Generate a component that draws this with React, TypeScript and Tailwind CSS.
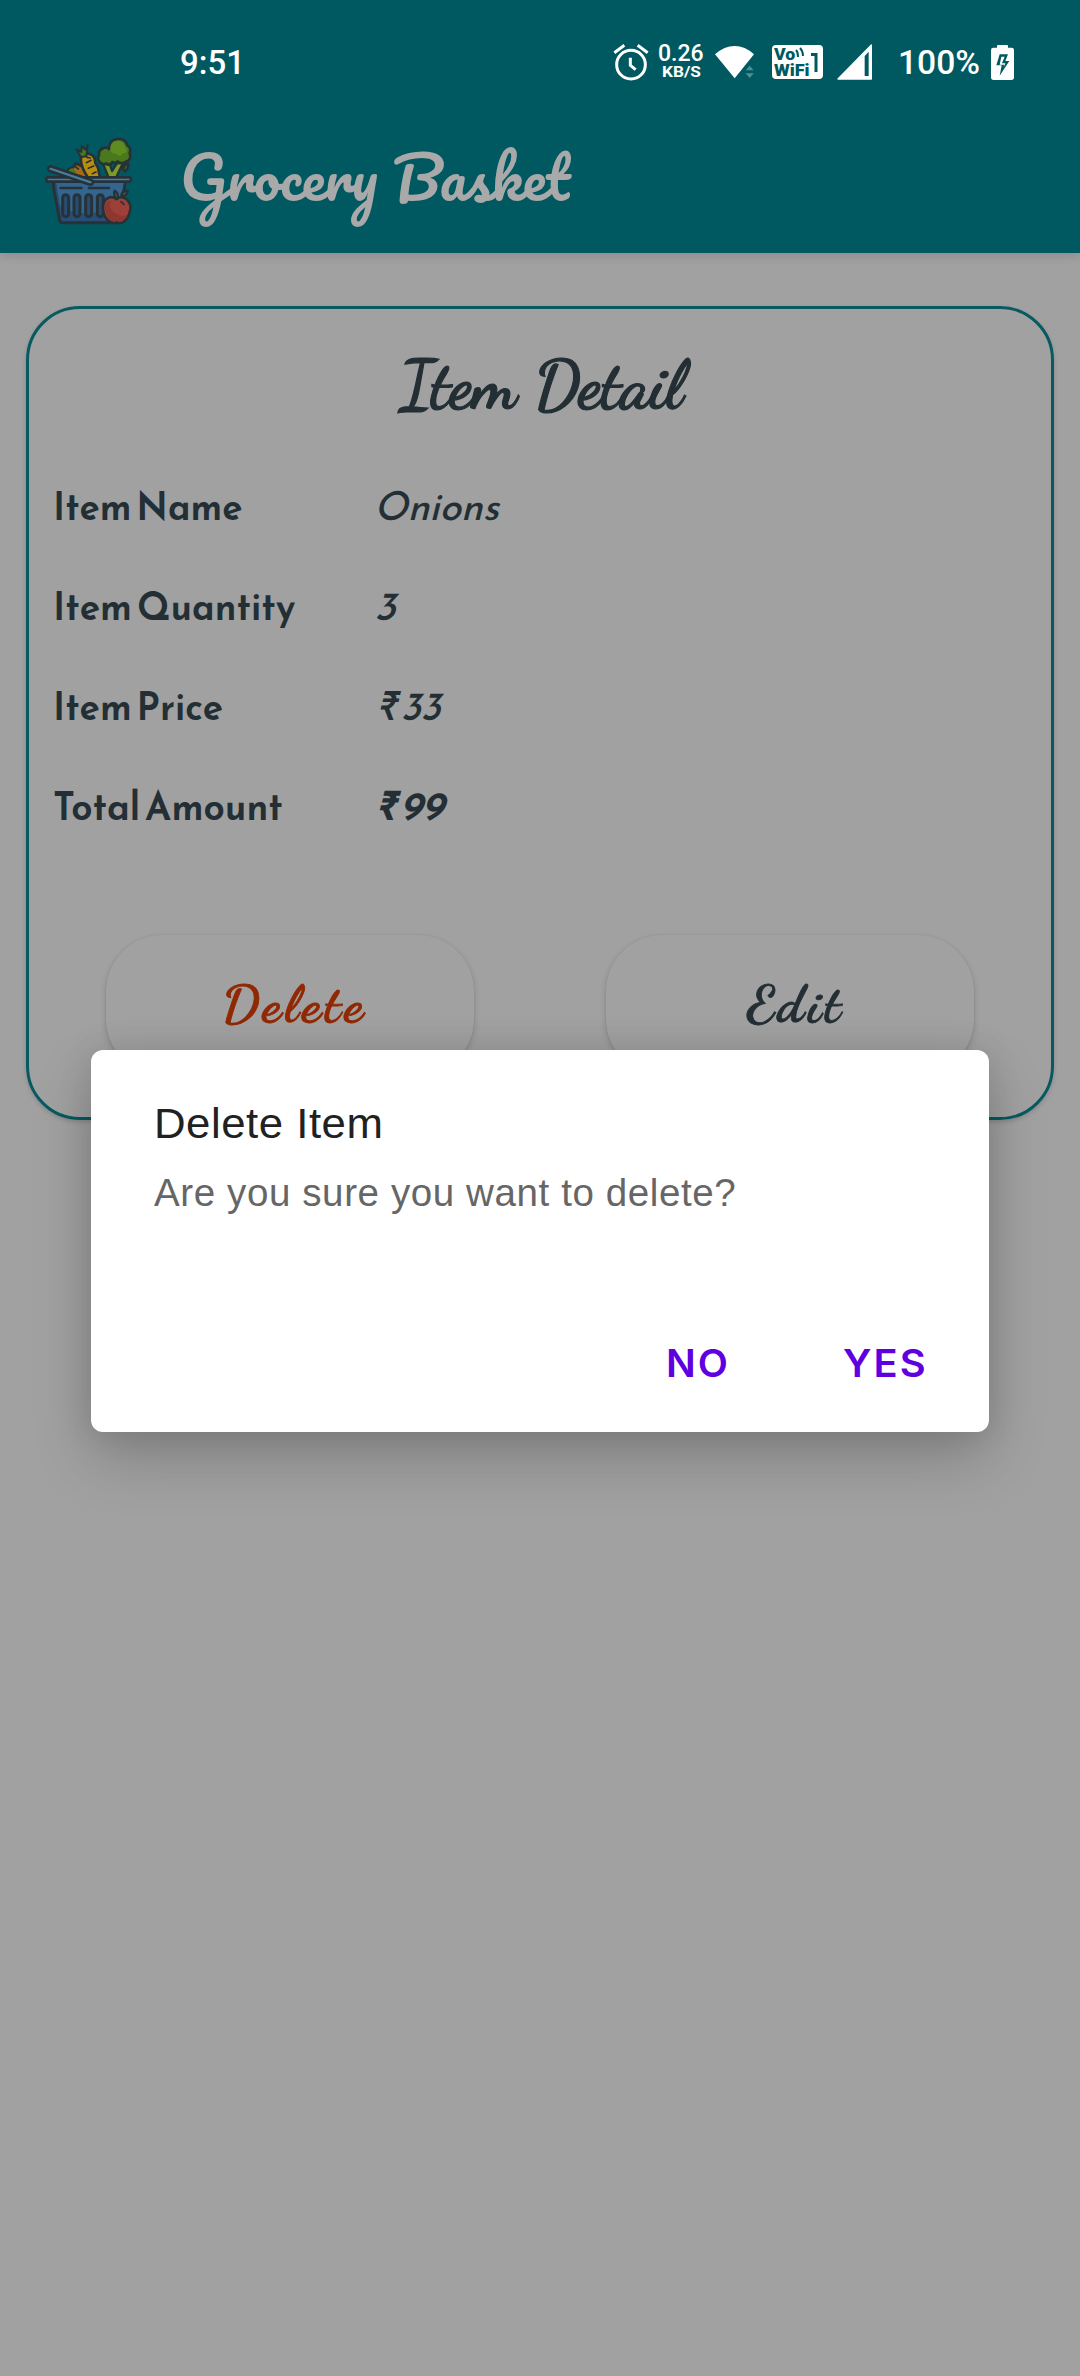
import { useLayoutEffect, useRef, useState } from "react";

/** Single line of text stretched horizontally to fill a given width. */
function Fit({ w, className = "", children }: { w: number; className?: string; children: string }) {
  const ref = useRef<HTMLSpanElement>(null);
  const [scale, setScale] = useState(1);
  useLayoutEffect(() => {
    if (ref.current) setScale(w / ref.current.offsetWidth);
  }, [w]);
  return (
    <span className="block shrink-0" style={{ width: w }}>
      <span
        ref={ref}
        className={`inline-block origin-left whitespace-nowrap ${className}`}
        style={{ transform: `scaleX(${scale})` }}
      >
        {children}
      </span>
    </span>
  );
}

function AlarmIcon() {
  return (
    <svg className="h-[37px] w-[36px]" viewBox="0 0 108 111" fill="none" stroke="#fff">
      <circle cx="54" cy="62" r="43" strokeWidth="9" />
      <path d="M4 26 34 4M74 4l30 22" strokeWidth="9" />
      <path d="M52 41v23l16 13" strokeWidth="9" />
    </svg>
  );
}

function WifiIcon() {
  return (
    <svg className="h-[33px] w-[41px]" viewBox="0 0 123 99">
      <path d="M0 25Q28 0 59 0t58 25L59 97Z" fill="#fff" />
      <path d="M92 73 104 59l12 14ZM92 82h24l-12 14Z" fill="#4f8f94" />
    </svg>
  );
}

function VoWifiIcon() {
  return (
    <span className="relative flex h-[34px] w-[51px] rounded-[4px] bg-white font-['Roboto',sans-serif] font-black leading-none text-[#005960]">
      <span className="flex flex-col pl-[2px] pt-[2px]">
        <Fit w={21} className="text-[16px] leading-[15px]">Vo</Fit>
        <Fit w={35} className="text-[16px] leading-[16px]">WiFi</Fit>
      </span>
      <svg className="absolute left-[23px] top-[2px] h-[11px] w-[9px]" viewBox="0 0 9 11" fill="none" stroke="#005960" strokeWidth="2">
        <path d="M1 3q2 2 2 7M5 1q3 3 3 8" />
      </svg>
      <svg className="absolute left-[39px] top-[7px] h-[20px] w-[8px]" viewBox="0 0 8 20" fill="none" stroke="#005960" strokeWidth="3">
        <path d="M0 2.5h5V20" />
      </svg>
    </span>
  );
}

function SignalIcon() {
  return (
    <svg className="h-[36px] w-[36px]" viewBox="0 0 108 108">
      <path d="M3 105 103 3v102Z" fill="#fff" stroke="#fff" strokeWidth="4" strokeLinejoin="round" />
      <path d="M83 36 95 23v73H83Z" fill="#005960" />
    </svg>
  );
}

function BatteryIcon() {
  return (
    <svg className="h-[35px] w-[23px]" viewBox="0 0 69 105">
      <path d="M18 8V3q0-3 3-3h27q3 0 3 3v5h11q7 0 7 7v82q0 8-8 8H8q-8 0-8-8V15q0-7 7-7Z" fill="#fff" />
      <path d="M26 28h25L43 48h12L26 92l6-31H16Z" fill="#005960" />
      <path d="M31 35h10l-8 20h10l-5 13 2-9H26Z" fill="#fff" />
    </svg>
  );
}

function BasketLogo() {
  return (
    <svg className="h-[120px] w-[120px] shrink-0" viewBox="0 0 360 360" strokeLinejoin="round" strokeLinecap="round">
      {/* carrots */}
      <path d="M108 158q0-16 18-18l8-13 22 10 14 33h-52Z" fill="#a96a16" stroke="#263238" strokeWidth="8" />
      <path d="M153 103q10-8 25-3 15 6 15 26l8 14 6 30h-36q-20-30-21-50-2-10 3-17Z" fill="#b98e0b" stroke="#263238" strokeWidth="8" />
      <path d="M150 108 136 84l15 9 1-19 10 12 8-14-4 34Z" fill="#4c7a1c" stroke="#263238" strokeWidth="6" />
      <path d="M112 154q2-12 14-12l10 10-10 9Z" fill="#4c7a1c" />
      <path d="m166 125 14-7M172 142l16-7M168 109l10 2M184 158l11-5M132 136l10 8" fill="none" stroke="#263238" strokeWidth="5" />
      {/* broccoli stalk */}
      <path d="M216 128l17 42h22l22-46-20 4-14 22-6-18Z" fill="#7d9c25" stroke="#263238" strokeWidth="7" />
      {/* broccoli crown */}
      <path d="M207 124q-10-10-3-21-3-18 17-23 9-1 13 4 0-29 26-30 22-2 29 19 13 7 7 23 8 22-14 27-12 8-22-2-8 8-16 2-6 12-18 4-10 6-19-3Z" fill="#4a781c" stroke="#263238" strokeWidth="8" />
      <path d="M238 88q-2-27 22-29 17 0 22 19 9 8 2 18-8-2-12 6-10 6-16-4-14 2-18-10Z" fill="#5f8c20" />
      <path d="m275 143 9-14 7-2v12l-8 13Z" fill="#46721d" stroke="#263238" strokeWidth="8" />
      {/* basket */}
      <path d="M67 181h216l-5 31-18 88q-1 5-6 5H95q-8 0-9-8L69 207Z" fill="#274e76" stroke="#263238" strokeWidth="9" />
      <path d="M76 184h202l-7 42q-40 48-89 51-64 4-95-24Z" fill="#34658f" />
      <path d="M52 169h243q5 0 5 6t-5 7H52q-6 0-6-7t6-6Z" fill="#407eaa" stroke="#263238" strokeWidth="8" />
      <path d="M89 201h62M174 201h60" stroke="#263238" strokeWidth="8" />
      <g fill="#294d70" stroke="#263238" strokeWidth="9">
        <rect x="95" y="221" width="18" height="66" rx="9" />
        <rect x="129" y="221" width="18" height="66" rx="9" />
        <rect x="164" y="221" width="18" height="66" rx="9" />
        <rect x="199" y="221" width="18" height="66" rx="9" />
      </g>
      <path d="m59 136 120 40q10 5 6 12-4 5-12 2L54 149q-8-8 5-13Z" fill="#477e9f" stroke="#263238" strokeWidth="8" />
      {/* apple */}
      <path d="M255 233q18-10 31 1 17 15 11 36-5 25-22 34-10 5-19 0-9 5-20-2-18-13-20-36-3-24 13-34 12-8 26 1Z" fill="#9d4038" stroke="#263238" strokeWidth="8" />
      <path d="M221 259q4-18 20-20-10 20 7 34 17 14 39 10-13 24-28 16-11 5-19-1-18-16-19-39Z" fill="#87332f" opacity=".7" />
      <path d="m270 242 9 8" stroke="#263238" strokeWidth="5" />
      <path d="M256 235q-10-15-5-26 12 7 9 24Z" fill="#4e761d" stroke="#263238" strokeWidth="7" />
      <path d="M271 223q2-13 19-13-3 17-19 13Z" fill="#4e761d" stroke="#263238" strokeWidth="7" />
    </svg>
  );
}

const rows = [
  { label: "Item Name", lw: 190, value: "Onions", vw: 125, bold: false },
  { label: "Item Quantity", lw: 242, value: "3", vw: 22, bold: false },
  { label: "Item Price", lw: 170, value: "₹ 33", vw: 67, bold: false },
  { label: "Total Amount", lw: 230, value: "₹ 99", vw: 69, bold: true },
];

export default function App() {
  return (
    <div className="relative h-[2376px] w-[1080px] overflow-hidden bg-[#a1a1a1] text-[#232f34]">
      <header className="h-[253px] bg-[#005960] shadow-[0_2px_10px_rgba(0,0,0,0.16)]">
        <div className="flex h-[122px] items-center pl-[180px] pt-[2px] font-['Roboto',sans-serif] font-medium leading-none text-white">
          <Fit w={65} className="text-[34px]">9:51</Fit>
          <div className="ml-[368px] flex items-center">
            <AlarmIcon />
            <div className="ml-[9px] flex w-[46px] flex-col items-center pt-[1px]">
              <Fit w={46} className="text-[23px] leading-[18px]">0.26</Fit>
              <Fit w={39} className="text-[15px] font-bold leading-[14px]">KB/S</Fit>
            </div>
            <span className="ml-[11px]"><WifiIcon /></span>
            <span className="ml-[16px]"><VoWifiIcon /></span>
            <span className="ml-[14px]"><SignalIcon /></span>
            <span className="ml-[25px]"><Fit w={82} className="text-[34px]">100%</Fit></span>
            <span className="ml-[11px]"><BatteryIcon /></span>
          </div>
        </div>
        <div className="flex items-start pl-[31px]">
          <span className="-mt-[1px]"><BasketLogo /></span>
          <span className="ml-[29px] pt-[12px] text-[#a9a9a9]">
            <Fit w={390} className="font-['Pacifico','Lato',cursive] text-[58px] leading-[84px]">Grocery Basket</Fit>
          </span>
        </div>
      </header>

      <main className="px-[26px] pt-[53px]">
        <section className="h-[814px] rounded-[54px] border-[3px] border-[#075a60] shadow-[0_2px_4px_rgba(0,0,0,0.16)]">
          <h1 className="flex h-[147px] justify-center pl-[2px] pt-[34px]">
            <Fit w={284} className="font-['Dancing_Script','Lato',cursive] text-[69px] font-bold leading-[84px] [-webkit-text-stroke:1.2px_#232f34]">Item Detail</Fit>
          </h1>
          <dl className="pl-[24px] font-['Reem_Kufi','Josefin_Sans','Lato',sans-serif]">
            {rows.map((r) => (
              <div key={r.label} className="flex h-[100px] items-center">
                <dt className="w-[321px]"><Fit w={r.lw} className="text-[40px] font-semibold leading-[48px]">{r.label}</Fit></dt>
                <dd className="italic">
                  <Fit w={r.vw} className={r.bold ? "text-[40px] font-semibold leading-[48px]" : "text-[40px] leading-[48px]"}>{r.value}</Fit>
                </dd>
              </div>
            ))}
          </dl>
          <div className="mt-[79px] flex justify-between px-[77px] font-['Dancing_Script','Lato',cursive] font-bold">
            <button className="flex h-[140px] w-[368px] items-center rounded-[56px] bg-[#a1a1a1] pl-[114px] text-[#902803] shadow-[0_3px_6px_rgba(0,0,0,0.16),0_0_2px_rgba(0,0,0,0.08)]">
              <Fit w={145} className="text-[52px] leading-[64px] tracking-[4px] [-webkit-text-stroke:0.8px_#902803]">Delete</Fit>
            </button>
            <button className="flex h-[140px] w-[368px] items-center rounded-[56px] bg-[#a1a1a1] pl-[139px] shadow-[0_3px_6px_rgba(0,0,0,0.16),0_0_2px_rgba(0,0,0,0.08)]">
              <Fit w={98} className="text-[52px] leading-[64px] tracking-[4px] [-webkit-text-stroke:0.8px_#232f34]">Edit</Fit>
            </button>
          </div>
        </section>
      </main>

      <div
        role="dialog"
        className="absolute left-[91px] top-[1050px] flex h-[382px] w-[898px] flex-col rounded-[12px] bg-white pl-[63px] pr-[61px] pt-[46px] font-['Liberation_Sans',sans-serif] shadow-[0_26px_60px_rgba(0,0,0,0.2),0_0_34px_rgba(0,0,0,0.1)]"
      >
        <h2 className="text-[#212121]"><Fit w={229} className="text-[43px] leading-[54px] tracking-[0.5px]">Delete Item</Fit></h2>
        <p className="mt-[18px] text-[#666666]"><Fit w={582} className="text-[39px] leading-[50px] tracking-[0.6px]">Are you sure you want to delete?</Fit></p>
        <div className="mt-[120px] flex justify-end font-['Inter',sans-serif] font-semibold text-[#5f00e0]">
          <Fit w={64} className="text-[38px] leading-[50px] tracking-[2px]">NO</Fit>
          <span className="ml-[113px]"><Fit w={85} className="text-[38px] leading-[50px] tracking-[2px]">YES</Fit></span>
        </div>
      </div>
    </div>
  );
}
